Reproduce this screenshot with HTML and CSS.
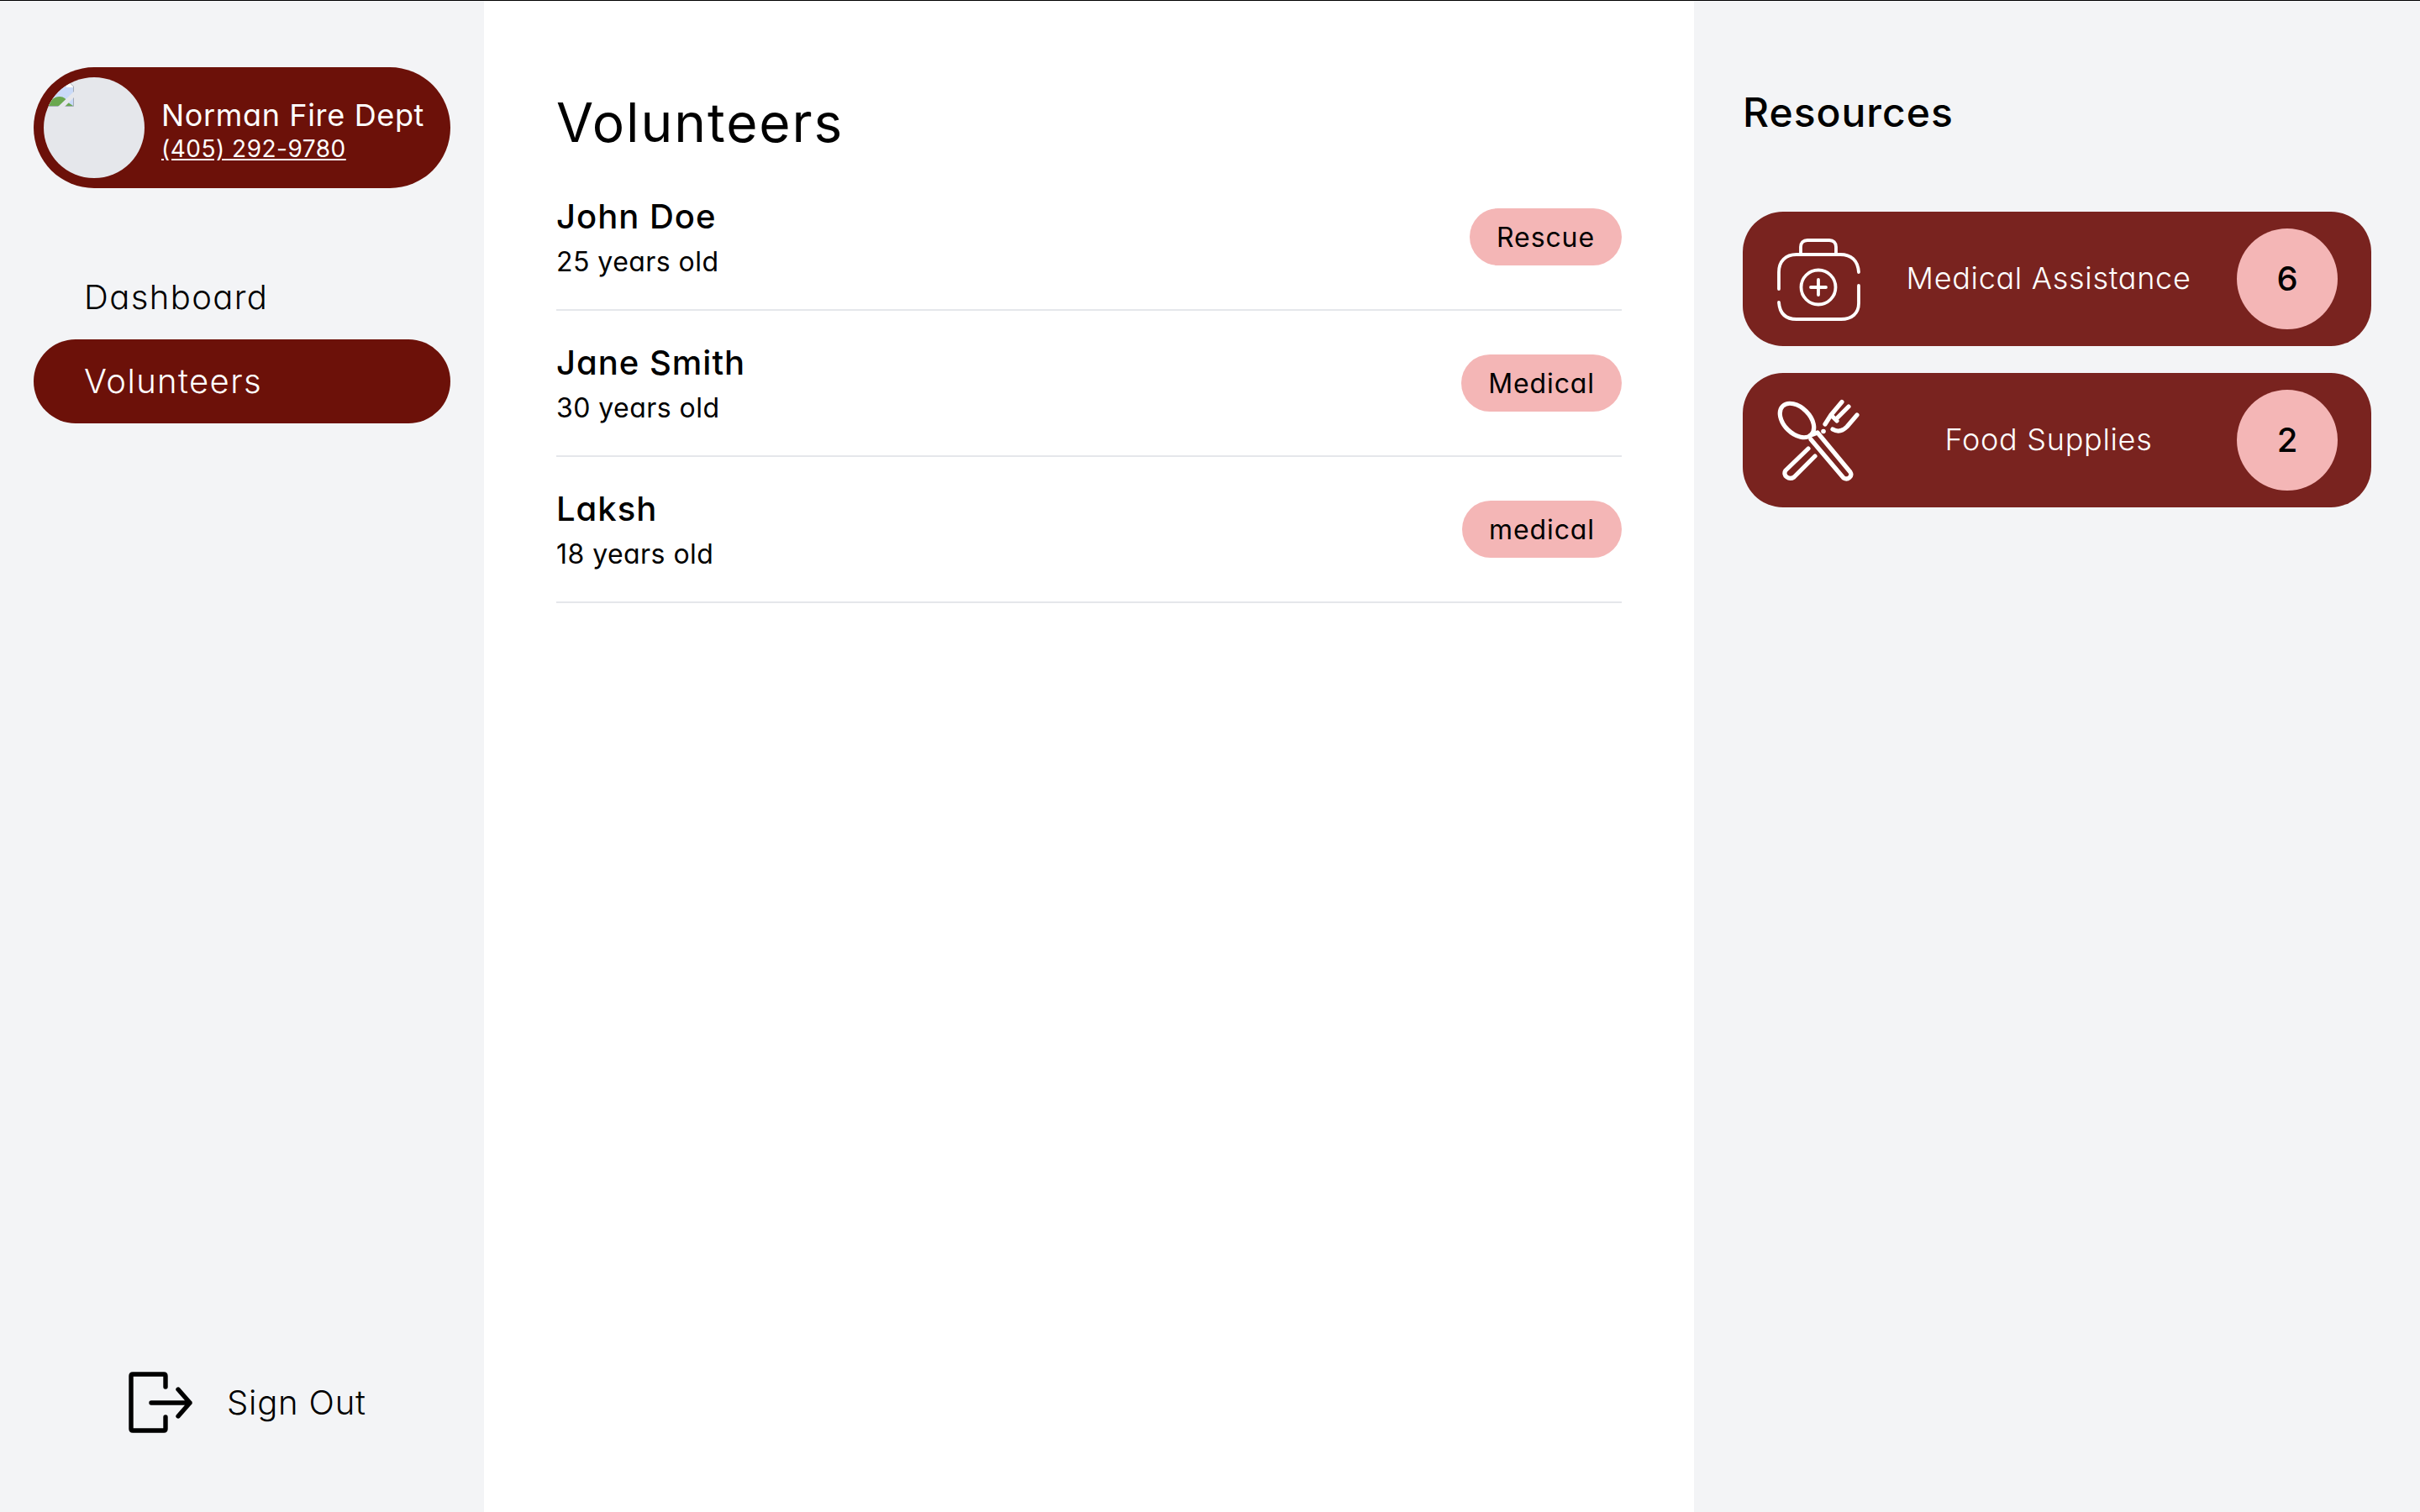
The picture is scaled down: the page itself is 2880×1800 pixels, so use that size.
FILE: index.html
```html
<!DOCTYPE html>
<html lang="en">
<head>
<meta charset="utf-8">
<title>Volunteers</title>
<link rel="stylesheet" href="styles.css">
</head>
<body>
<div class="app">
  <aside class="sidebar">
    <div class="profile">
      <div class="avatar">
        <svg class="broken" viewBox="0 0 32 32" width="32" height="32">
          <path d="M.5 .5H24L31.5 8V31.5H.5Z" fill="#fff" stroke="#a3acb8"/>
          <path d="M1 1H23V9H31V31H1Z" fill="#c9daf8"/>
          <path d="M1 31C3 24 9 20 15 20C20 20 23 23 25 27L31 31Z" fill="#6aa84f"/>
          <path d="M13 32L32 14V21L21 32Z" fill="#e5e7eb"/>
        </svg>
      </div>
      <div class="profile-text">
        <div class="org">Norman Fire Dept</div>
        <a class="phone" href="#">(405) 292-9780</a>
      </div>
    </div>
    <nav class="nav">
      <a class="nav-item" href="#">Dashboard</a>
      <a class="nav-item active" href="#">Volunteers</a>
    </nav>
    <a class="signout" href="#">
      <svg viewBox="0 0 76 73" width="76" height="73" fill="none" stroke="#000" stroke-width="5.4" stroke-linecap="round" stroke-linejoin="round">
        <path d="M44 18V5C44 3.500 43.500 3 42 3H5C3.500 3 3 3.500 3 5V68C3 69.500 3.500 70 5 70H42C43.500 70 44 69.500 44 68V54"/>
        <path d="M27 37H73M59 21L73 37L59 53"/>
      </svg>
      <span>Sign Out</span>
    </a>
  </aside>
  <main class="main">
    <h1 class="title">Volunteers</h1>
    <ul class="list">
      <li class="row">
        <div class="person"><div class="name">John Doe</div><div class="age">25 years old</div></div>
        <span class="badge">Rescue</span>
      </li>
      <li class="row">
        <div class="person"><div class="name">Jane Smith</div><div class="age">30 years old</div></div>
        <span class="badge">Medical</span>
      </li>
      <li class="row">
        <div class="person"><div class="name">Laksh</div><div class="age">18 years old</div></div>
        <span class="badge">medical</span>
      </li>
    </ul>
  </main>
  <aside class="resources">
    <h2 class="res-title">Resources</h2>
    <div class="cards">
      <div class="card">
        <svg class="card-icon" viewBox="0 0 100 100" fill="none" stroke="#fff" stroke-width="3.8" stroke-linecap="round">
          <path d="M29 21V12C29 7 32 4 37 4H63C68 4 71 7 71 12V21"/>
          <path d="M3 62V42C3 29 11 21 24 21H76C89 21 97 28 98 42"/>
          <path d="M98 58V79C98 91 90 98 77 98H24C11 98 4 91 3 78"/>
          <circle cx="50" cy="60" r="20.500"/>
          <path d="M50 51V69M41 60H59"/>
        </svg>
        <span class="card-label">Medical Assistance</span>
        <span class="count">6</span>
      </div>
      <div class="card">
        <svg class="card-icon" viewBox="0 0 100 100" fill="none" stroke="#fff" stroke-width="5.200" stroke-linecap="round" stroke-linejoin="round">
          <ellipse cx="24.500" cy="26.500" rx="24" ry="15.500" transform="rotate(45 24.500 26.500)"/>
          <path d="M41 44L49 41L88 88C91 93 85 98 80 95L41 49"/>
          <path d="M38 60L11 86C7 92 15 98 21 94L46 69"/>
          <path d="M58 31L65 20L78 4.500M71 25L86 10M96 20L84 34C78 40 72 40 67 37M65 20L72 27"/>
          <circle cx="56" cy="39.500" r="2.800" fill="#fff" stroke="none"/>
        </svg>
        <span class="card-label">Food Supplies</span>
        <span class="count">2</span>
      </div>
    </div>
  </aside>
</div>
</body>
</html>
```

FILE: styles.css
```css
* { box-sizing: border-box; }
html, body { margin: 0; height: 100%; }
body {
  font-family: Inter, "Noto Sans", sans-serif;
  font-feature-settings: "cv11" 1;
  color: #000;
  background: #fff;
  border-top: 1px solid #000;
}
a { color: inherit; text-decoration: none; }
.app {
  display: grid;
  grid-template-columns: 576px 1440px 864px;
  height: 1799px;
}
.sidebar {
  background: #f3f4f6;
  padding: 79px 40px 94px;
  display: flex;
  flex-direction: column;
}
.profile {
  display: flex;
  align-items: center;
  gap: 20px;
  height: 144px;
  padding-left: 12px;
  border-radius: 72px;
  background: #6c1109;
  color: #fff;
}
.avatar {
  position: relative;
  width: 120px;
  height: 120px;
  border-radius: 50%;
  background: #e5e7eb;
  overflow: hidden;
  flex: none;
}
.broken { position: absolute; left: 4px; top: 3px; }
.profile-text { padding-top: 4px; }
.org { font-size: 36px; line-height: 44px; letter-spacing: 0.65px; }
.phone { display: block; margin-top: 2px; font-size: 28px; line-height: 32px; letter-spacing: 0.5px; text-decoration: underline; }
.nav {
  display: flex;
  flex-direction: column;
  margin-top: 80px;
}
.nav-item {
  display: flex;
  align-items: center;
  height: 100px;
  padding-left: 60px;
  padding-bottom: 2px;
  border-radius: 50px;
  font-size: 40px;
  font-weight: 300;
  letter-spacing: 1.4px;
}
.active { background: #6c1109; color: #fff; }
.signout {
  margin-top: auto;
  display: flex;
  align-items: center;
  gap: 41px;
  padding-left: 113px;
  font-size: 40px;
  font-weight: 300;
  letter-spacing: 0.8px;
}
.main { padding: 100px 86px 0; }
.title { margin: 0; font-size: 64px; line-height: 90px; font-weight: 400; letter-spacing: 1.9px; }
.list { margin: 5px 0 0; padding: 0; list-style: none; }
.row {
  display: flex;
  align-items: center;
  justify-content: space-between;
  height: 174px;
  border-bottom: 2px solid #e5e7eb;
}
.person { padding-top: 2px; }
.name { font-size: 40px; line-height: 56px; font-weight: 500; letter-spacing: 1px; }
.age { margin-top: 2px; font-size: 32px; line-height: 48px; letter-spacing: 0.45px; }
.badge {
  display: flex;
  align-items: center;
  height: 68px;
  padding: 0 32px;
  border-radius: 34px;
  background: #f4b6b6;
  font-size: 32px;
  letter-spacing: 0.9px;
}
.resources { background: #f3f4f6; padding: 97px 58px 0; }
.res-title { margin: 0; font-size: 48px; line-height: 72px; font-weight: 550; letter-spacing: 1px; }
.cards { display: flex; flex-direction: column; gap: 32px; margin-top: 82px; }
.card {
  display: flex;
  align-items: center;
  height: 160px;
  padding: 0 40px;
  border-radius: 48px;
  background: #79231f;
  color: #fff;
}
.card-icon { width: 100px; height: 100px; flex: none; }
.card-label { flex: 1; text-align: center; padding-bottom: 2px; font-size: 36px; font-weight: 300; letter-spacing: 0.7px; }
.count {
  display: flex;
  align-items: center;
  justify-content: center;
  width: 120px;
  height: 120px;
  padding-bottom: 2px;
  border-radius: 50%;
  background: #f4b6b6;
  color: #000;
  font-size: 40px;
  font-weight: 500;
}
```
